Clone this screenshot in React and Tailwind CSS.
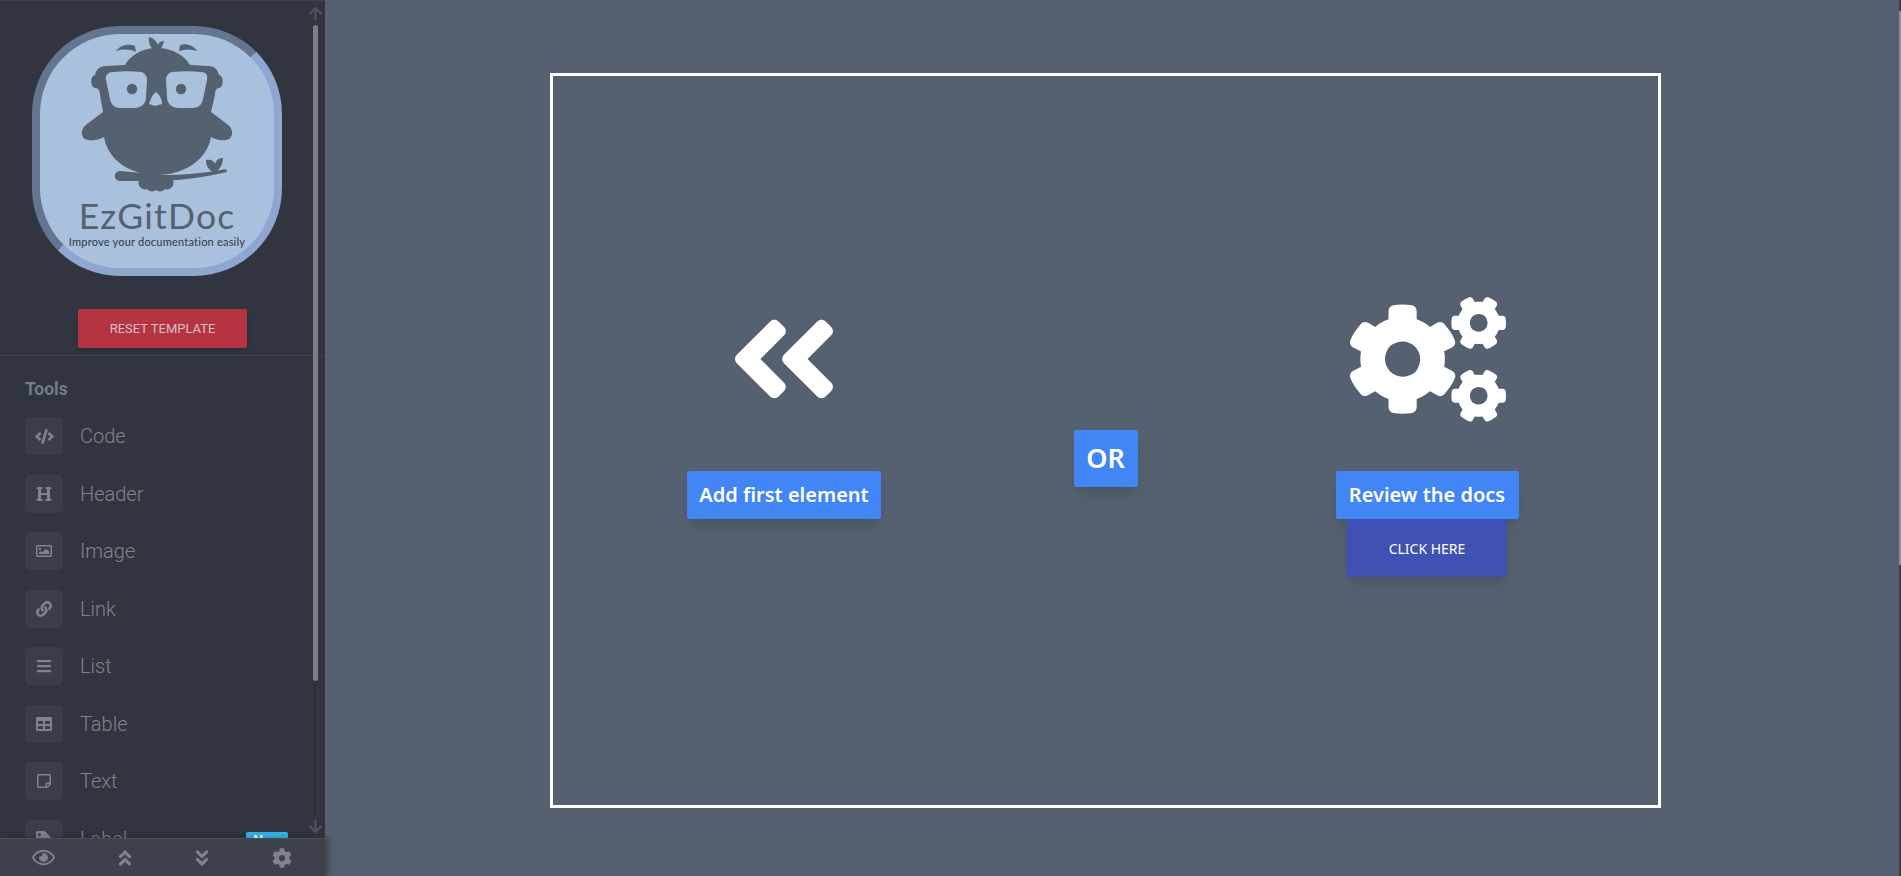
import React from 'react';
import {
  FaCode, FaHeading, FaRegImage, FaLink, FaBars, FaTable, FaRegStickyNote, FaTag,
  FaRegEye, FaAngleDoubleUp, FaAngleDoubleDown, FaCog, FaAngleDoubleLeft, FaCogs, FaArrowUp, FaArrowDown,
} from 'react-icons/fa';

const tools = [
  { name: 'Code', icon: FaCode, size: 19 },
  { name: 'Header', icon: FaHeading, size: 16 },
  { name: 'Image', icon: FaRegImage, size: 16 },
  { name: 'Link', icon: FaLink, size: 16 },
  { name: 'List', icon: FaBars, size: 16 },
  { name: 'Table', icon: FaTable, size: 16 },
  { name: 'Text', icon: FaRegStickyNote, size: 16 },
  { name: 'Label', icon: FaTag, size: 16, isNew: true },
];

const Owl = () => (
  <svg width="234" height="166" viewBox="40 34 234 166" className="shrink-0">
    {/* crest and brows */}
    <path fill="#556170" d="M149 37 C154 38 157 42 158 45 C159 42 161 41 164 41 C163 46 161 50 157 51 C151 50 148 43 149 37 Z" />
    <path fill="#556170" d="M116 51 C119 46 128 43 135 46 L136 52 C130 49 123 49 116 51 Z" />
    <path fill="#556170" d="M197 51 C194 46 186 43 180 45 L179 51 C185 49 191 49 197 51 Z" />
    {/* head and body */}
    <path fill="#556170" d="M157 48 C141 48 130 56 125 65 L106 66 C99 66 96 70 95 75 C90 76 90 87 95 88 C98 88 100 90 100 95 L103 112 L87 124 C79 130 81 139 88 140 C95 141 100 139 104 137 C108 160 130 175 157 175 C184 175 207 160 211 137 C215 139 220 141 226 140 C233 139 235 130 227 124 L211 112 L215 95 C215 90 217 88 219 88 C224 87 224 76 219 75 C218 70 215 66 208 66 L190 65 C185 56 173 48 157 48 Z" />
    {/* branch, leaf and feet */}
    <path fill="#556170" d="M120 171 L165 175 C185 175 205 173 226 169 L227 172 C205 177 185 180 160 181 L120 181 C113 181 113 171 120 171 Z" />
    <path fill="#556170" d="M206 160 C211 159 214 161 215 164 C216 160 219 158 223 158 C223 165 219 171 214 172 C209 171 206 166 206 160 Z" />
    <circle cx="145" cy="183" r="6.5" fill="#556170" />
    <circle cx="152" cy="185" r="6.5" fill="#556170" />
    <circle cx="160" cy="185" r="6.5" fill="#556170" />
    <circle cx="167" cy="183" r="6.5" fill="#556170" />
    {/* glasses */}
    <path fill="#a9c1dc" d="M113 72 C122 71 132 71 141 72 C145 73 147 76 147 80 L146 97 C146 104 141 108 134 108 L120 108 C114 108 111 104 110 99 L106 80 C105 75 108 72 113 72 Z" />
    <path fill="#a9c1dc" d="M201 72 C192 71 182 71 172 72 C168 73 166 76 166 80 L167 97 C167 104 172 108 179 108 L193 108 C199 108 202 104 203 99 L207 80 C208 75 206 72 201 72 Z" />
    <circle cx="132" cy="89" r="5.2" fill="#556170" />
    <circle cx="181" cy="89" r="5.2" fill="#556170" />
    <path fill="#a9c1dc" d="M156 92 C152 95 150 101 149 104 L155 106 L162 104 C162 100 160 95 156 92 Z" />
  </svg>
);

const App = () => {
  return (
    <div className="relative flex h-[876px] w-[1901px] overflow-hidden bg-[#556170] font-['Roboto',sans-serif]">
      {/* Sidebar */}
      <aside className="relative flex h-full w-[325px] shrink-0 flex-col bg-[#31353f] border-t border-[#3d414b]">
        <div className="min-h-0 flex-1 overflow-hidden">
          <div className="pt-[25px] pl-[32px]">
            <div className="h-[250px] w-[250px] overflow-hidden rounded-[88px] border-8 border-[#63758f] border-r-[#8fa6d0] border-b-[#8fa6d0] bg-[#a9c1dc]">
              <Owl />
              <div className="mt-[-3px] text-center font-['Lato',sans-serif] text-[35.5px] leading-[38px] tracking-[1.2px] text-[#556170]">EzGitDoc</div>
              <div className="text-center font-['Lato',sans-serif] text-[11px] leading-[14px] tracking-[0.2px] font-medium text-[#3a4451]">Improve your documentation easily</div>
            </div>
          </div>
          <div className="mt-[33px] flex justify-center pb-[7px] border-b border-[#3d414b]">
            <button className="h-[39px] w-[169px] rounded-[2px] bg-[#b73341] text-[13px] text-[#d6c2c5] shadow-md">RESET TEMPLATE</button>
          </div>
          <div className="pl-[25px] pt-[23px]">
            <div className="mb-[17px] text-[17.5px] font-bold leading-[21px] text-[#6d7f8f]">Tools</div>
            {tools.map((t) => (
              <div key={t.name} className="mb-[19.5px] flex h-[38px] w-[263px] items-center">
                <div className="flex h-[38px] w-[38px] items-center justify-center rounded-[5px] bg-[#3a3e49] text-[#80848f]">
                  <t.icon size={t.size} />
                </div>
                <span className="ml-[17px] text-[20px] font-light text-[#80848f]">{t.name}</span>
                {t.isNew && <span className="ml-auto mt-[5px] rounded-[2px] bg-[#33b5e5] px-[7px] text-[14px] font-bold leading-[18px] text-white">New</span>}
              </div>
            ))}
          </div>
        </div>

        {/* Scrollbar */}
        <FaArrowUp size={15} className="absolute left-[308px] top-[5px] text-[#50545e]" />
        <div className="absolute left-[313px] top-[24px] h-[656px] w-[5px] rounded-[3px] bg-[#7a7e85]" />
        <div className="absolute left-[314px] top-[680px] h-[133px] w-[2px] bg-[#2a2d35]" />
        <FaArrowDown size={15} className="absolute left-[308px] top-[818px] text-[#50545e]" />

        {/* Bottom bar */}
        <div className="relative grid h-[38px] shrink-0 grid-cols-[86px_78px_76px_84px] items-center border-t border-[#4a4e58] bg-[#3d414b] text-[#7f838e] shadow-[4px_0_6px_rgba(0,0,0,0.3)]">
          <FaRegEye size={23} className="justify-self-center" />
          <FaAngleDoubleUp size={20} className="justify-self-center" />
          <FaAngleDoubleDown size={20} className="justify-self-center" />
          <FaCog size={20} className="justify-self-center" />
        </div>
      </aside>

      {/* Canvas */}
      <main className="min-w-0 flex-1 pl-[225px] pt-[73px]">
        <div className="h-[735px] w-[1111px] border-[3px] border-white font-['Noto_Sans',sans-serif] text-white">
          <div className="grid grid-cols-[462px_181px_462px] pt-[219px]">
            <div className="flex flex-col items-center">
              <FaAngleDoubleLeft className="h-[126px] w-[110px] my-[1px]" />
              <button className="mt-[48px] h-[48px] w-[194px] rounded-[2px] bg-[#4285f4] text-[20px] font-semibold shadow-lg">Add first element</button>
            </div>
            <div className="flex justify-center pt-[135px]">
              <div className="flex h-[57px] w-[64px] items-center justify-center rounded-[2px] bg-[#4285f4] text-[27px] font-semibold shadow-lg">OR</div>
            </div>
            <div className="flex flex-col items-center">
              <FaCogs className="ml-[2px] my-[1.5px] h-[125px] w-[156px]" />
              <button className="mt-[48px] h-[48px] w-[183px] rounded-[2px] bg-[#4285f4] text-[20px] font-semibold shadow-lg">Review the docs</button>
              <button className="h-[58px] w-[160px] rounded-[2px] bg-[#3f51b5] text-[14px] shadow-lg">CLICK HERE</button>
            </div>
          </div>
        </div>
      </main>

      {/* Page scrollbar sliver at the window edge */}
      <div className="absolute right-0 top-0 flex h-full w-[2px] flex-col">
        <div className="h-[11px] bg-[#3a3f49]" />
        <div className="h-[554px] bg-[#8a8f97]" />
        <div className="flex-1 bg-[#3a3f49]" />
      </div>
    </div>
  );
};

export default App;
